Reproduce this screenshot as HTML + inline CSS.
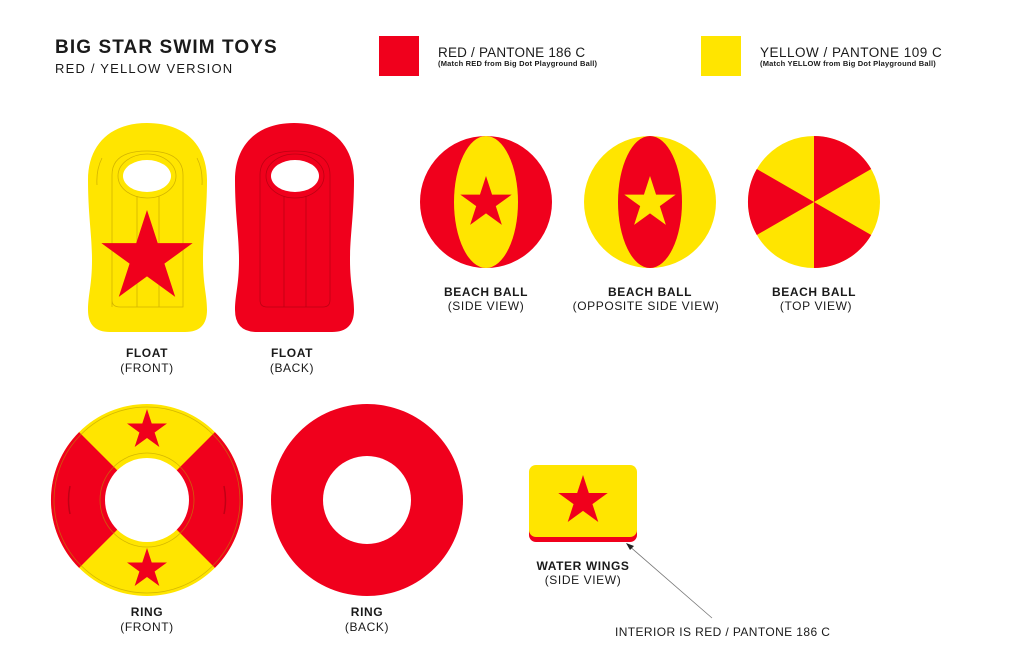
<!DOCTYPE html>
<html><head><meta charset="utf-8"><style>
html,body{margin:0;padding:0;background:#fff;}
svg{display:block;}
text{font-family:"Liberation Sans",sans-serif;fill:#1a1a1a;}
.l{font-size:12px;text-anchor:middle;letter-spacing:0.6px;}
.b{font-weight:bold;}
</style></head><body>
<svg width="1019" height="653" viewBox="0 0 1019 653" xmlns="http://www.w3.org/2000/svg">
<defs>
<path id="st" d="M0,-1 L0.2245,-0.309 L0.951,-0.309 L0.363,0.118 L0.588,0.809 L0,0.382 L-0.588,0.809 L-0.363,0.118 L-0.951,-0.309 L-0.2245,-0.309 Z"/>
<path id="fl" d="M147,123 C185,123 207,145 207,180 C207,215 203,235 203,260 C203,285 207,295 207,310 Q207,332 185,332 L110,332 Q88,332 88,310 C88,295 92,285 92,260 C92,235 88,215 88,180 C88,145 110,123 147,123 Z"/>
</defs>
<text x="55" y="53" style="font-size:19px;font-weight:bold;letter-spacing:1.1px">BIG STAR SWIM TOYS</text>
<text x="55" y="73" style="font-size:13px;letter-spacing:1.2px">RED / YELLOW VERSION</text>
<rect x="379" y="36" width="40" height="40" fill="#f0001c"/>
<text x="438" y="57" style="font-size:13.5px;letter-spacing:0.2px">RED / PANTONE 186 C</text>
<text x="438" y="66" style="font-size:7.5px;font-weight:bold;letter-spacing:0.2px">(Match RED from Big Dot Playground Ball)</text>
<rect x="701" y="36" width="40" height="40" fill="#ffe500"/>
<text x="760" y="57" style="font-size:13.5px;letter-spacing:0.5px">YELLOW / PANTONE 109 C</text>
<text x="760" y="66" style="font-size:7.5px;font-weight:bold;letter-spacing:0.2px">(Match YELLOW from Big Dot Playground Ball)</text>

<use href="#fl" fill="#ffe500"/>
<g fill="none" stroke="#c8a800" stroke-width="0.8" opacity="0.8">
<path d="M112,307 L112,175 Q112,151 147,151 Q183,151 183,175 L183,307 Q183,307 175,307 L120,307 Q112,307 112,300"/>
<ellipse cx="147" cy="176" rx="29" ry="22"/>
<line x1="137" y1="196" x2="137" y2="307"/><line x1="159" y1="196" x2="159" y2="307"/>
<path d="M102,158 Q96,170 97,185 M197,158 Q203,170 202,185"/>
</g>
<ellipse cx="147" cy="176" rx="24" ry="16" fill="#fff"/>
<use href="#st" fill="#f0001c" transform="translate(147,258) scale(48)"/>
<use href="#fl" fill="#f0001c" transform="translate(147,0)"/>
<g fill="none" stroke="#b00010" stroke-width="0.8" opacity="0.8">
<path d="M260,300 L260,175 Q260,151 295,151 Q330,151 330,175 L330,300 Q330,307 323,307 L267,307 Q260,307 260,300"/>
<ellipse cx="295" cy="176" rx="29" ry="22"/>
<line x1="284" y1="196" x2="284" y2="307"/><line x1="306" y1="196" x2="306" y2="307"/>
</g>
<ellipse cx="295" cy="176" rx="24" ry="16" fill="#fff"/>
<text class="l b" x="147" y="357">FLOAT</text><text class="l" x="147" y="372">(FRONT)</text>
<text class="l b" x="292" y="357">FLOAT</text><text class="l" x="292" y="372">(BACK)</text>

<circle cx="486" cy="202" r="66" fill="#f0001c"/>
<ellipse cx="486" cy="202" rx="32" ry="66" fill="#ffe500"/>
<use href="#st" fill="#f0001c" transform="translate(486,203) scale(27)"/>
<circle cx="650" cy="202" r="66" fill="#ffe500"/>
<ellipse cx="650" cy="202" rx="32" ry="66" fill="#f0001c"/>
<use href="#st" fill="#ffe500" transform="translate(650,203) scale(27)"/>
<circle cx="814" cy="202" r="66" fill="#ffe500"/>
<path fill="#f0001c" d="M814,202 L814,136 A66,66 0 0 1 871.2,169 Z M814,202 L871.2,235 A66,66 0 0 1 814,268 Z M814,202 L756.8,235 A66,66 0 0 1 756.8,169 Z"/>
<text class="l b" x="486" y="296">BEACH BALL</text><text class="l" x="486" y="310">(SIDE VIEW)</text>
<text class="l b" x="650" y="296">BEACH BALL</text><text class="l" x="646" y="310">(OPPOSITE SIDE VIEW)</text>
<text class="l b" x="814" y="296">BEACH BALL</text><text class="l" x="816" y="310">(TOP VIEW)</text>

<circle cx="147" cy="500" r="96" fill="#ffe500"/>
<path fill="#f0001c" d="M147,500 L79.1,432.1 A96,96 0 0 0 79.1,567.9 Z M147,500 L214.9,432.1 A96,96 0 0 1 214.9,567.9 Z"/>
<circle cx="147" cy="500" r="93" fill="none" stroke="#b89a00" stroke-width="0.8" opacity="0.6"/>
<circle cx="147" cy="500" r="47" fill="none" stroke="#b89a00" stroke-width="0.8" opacity="0.6"/>
<path d="M70,486 Q67,500 70,514 M224,486 Q227,500 224,514" fill="none" stroke="#a00010" stroke-width="1.5" opacity="0.6"/>
<circle cx="147" cy="500" r="42" fill="#fff"/>
<use href="#st" fill="#f0001c" transform="translate(147,430) scale(21)"/>
<use href="#st" fill="#f0001c" transform="translate(147,569) scale(21)"/>
<circle cx="367" cy="500" r="96" fill="#f0001c"/>
<circle cx="367" cy="500" r="44" fill="#fff"/>
<text class="l b" x="147" y="616">RING</text><text class="l" x="147" y="631">(FRONT)</text>
<text class="l b" x="367" y="616">RING</text><text class="l" x="367" y="631">(BACK)</text>

<rect x="529" y="467" width="108" height="75" rx="7" fill="#f0001c"/>
<rect x="529" y="465" width="108" height="72" rx="7" fill="#ffe500"/>
<use href="#st" fill="#f0001c" transform="translate(583,501) scale(26)"/>
<text class="l b" x="583" y="570">WATER WINGS</text><text class="l" x="583" y="584">(SIDE VIEW)</text>
<line x1="712" y1="618" x2="628" y2="545" stroke="#777" stroke-width="0.8"/>
<path d="M626,543 L634,546 L630,550 Z" fill="#222"/>
<text x="615" y="636" style="font-size:12px;letter-spacing:0.4px">INTERIOR IS RED / PANTONE 186 C</text>
</svg>
</body></html>
